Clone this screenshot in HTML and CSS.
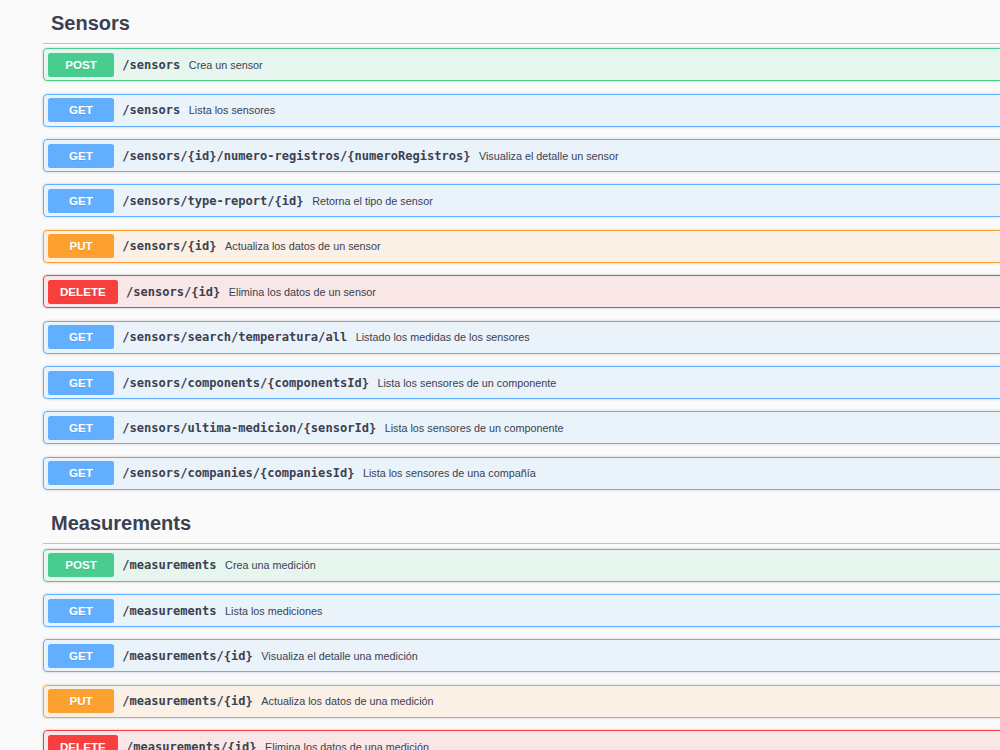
FILE: index.html
```html
<!DOCTYPE html>
<html lang="es">
<head>
<meta charset="UTF-8">
<meta name="viewport" content="width=device-width, initial-scale=1.0">
<title>API docs</title>
<link rel="stylesheet" href="styles.css">
</head>
<body>
<div class="page">
<div class="wrapper">

  <section class="tag-section">
    <h4 class="tag">Sensors</h4>
    <div class="opblock post"><span class="method">POST</span><span class="path">/sensors</span><span class="desc">Crea un sensor</span></div>
    <div class="opblock get"><span class="method">GET</span><span class="path">/sensors</span><span class="desc">Lista los sensores</span></div>
    <div class="opblock get"><span class="method">GET</span><span class="path">/sensors/{id}/numero-registros/{numeroRegistros}</span><span class="desc">Visualiza el detalle un sensor</span></div>
    <div class="opblock get"><span class="method">GET</span><span class="path">/sensors/type-report/{id}</span><span class="desc">Retorna el tipo de sensor</span></div>
    <div class="opblock put"><span class="method">PUT</span><span class="path">/sensors/{id}</span><span class="desc">Actualiza los datos de un sensor</span></div>
    <div class="opblock delete"><span class="method">DELETE</span><span class="path">/sensors/{id}</span><span class="desc">Elimina los datos de un sensor</span></div>
    <div class="opblock get"><span class="method">GET</span><span class="path">/sensors/search/temperatura/all</span><span class="desc">Listado los medidas de los sensores</span></div>
    <div class="opblock get"><span class="method">GET</span><span class="path">/sensors/components/{componentsId}</span><span class="desc">Lista los sensores de un componente</span></div>
    <div class="opblock get"><span class="method">GET</span><span class="path">/sensors/ultima-medicion/{sensorId}</span><span class="desc">Lista los sensores de un componente</span></div>
    <div class="opblock get"><span class="method">GET</span><span class="path">/sensors/companies/{companiesId}</span><span class="desc">Lista los sensores de una compañía</span></div>
  </section>

  <section class="tag-section">
    <h4 class="tag">Measurements</h4>
    <div class="opblock post"><span class="method">POST</span><span class="path">/measurements</span><span class="desc">Crea una medición</span></div>
    <div class="opblock get"><span class="method">GET</span><span class="path">/measurements</span><span class="desc">Lista los mediciones</span></div>
    <div class="opblock get"><span class="method">GET</span><span class="path">/measurements/{id}</span><span class="desc">Visualiza el detalle una medición</span></div>
    <div class="opblock put"><span class="method">PUT</span><span class="path">/measurements/{id}</span><span class="desc">Actualiza los datos de una medición</span></div>
    <div class="opblock delete"><span class="method">DELETE</span><span class="path">/measurements/{id}</span><span class="desc">Elimina los datos de una medición</span></div>
  </section>

</div>
</div>
</body>
</html>
```

FILE: styles.css
```css
:root {
  --text: #3b4151;
  --bg: #fafafa;
  --post: #49cc90; --get: #61affe; --put: #fca130; --delete: #f93e3e;
}
* { box-sizing: border-box; margin: 0; padding: 0; }
body { background: var(--bg); color: var(--text); font-family: "Liberation Sans", Arial, sans-serif; overflow: hidden; }

.page { width: 100%; height: 750px; overflow: hidden; padding-top: 4px; }
.wrapper { width: 1100px; margin-left: 43px; }
.tag-section { padding-bottom: 2.2px; }

.tag { font-size: 20px; font-weight: 700; line-height: 23px; padding: 7.5px 16px 8.5px 8px; border-bottom: 1px solid rgba(59,65,81,0.3); margin-bottom: 4.3px; }

.opblock { display: flex; align-items: center; height: 33px; padding: 0 4px; border: 1px solid; border-radius: 4px; margin-bottom: 12.4px; box-shadow: 0 0 3px rgba(0,0,0,0.19); }
.method { min-width: 66px; height: 24px; line-height: 24px; padding: 0 12px; border-radius: 2.5px; color: #fff; font-size: 11.6px; font-weight: 700; text-align: center; text-shadow: 0 1px 0 rgba(0,0,0,0.1); }
.path { padding: 0 8.5px 0 8.3px; font-family: "DejaVu Sans Mono", monospace; font-size: 12.05px; font-weight: 700; }
.desc { font-size: 10.8px; }

.opblock.post { background: rgba(73,204,144,0.1); border-color: var(--post); }
.opblock.post .method { background: var(--post); }
.opblock.get { background: rgba(97,175,254,0.1); border-color: var(--get); }
.opblock.get .method { background: var(--get); }
.opblock.put { background: rgba(252,161,48,0.1); border-color: var(--put); }
.opblock.put .method { background: var(--put); }
.opblock.delete { background: rgba(249,62,62,0.1); border-color: var(--delete); }
.opblock.delete .method { background: var(--delete); }
```
